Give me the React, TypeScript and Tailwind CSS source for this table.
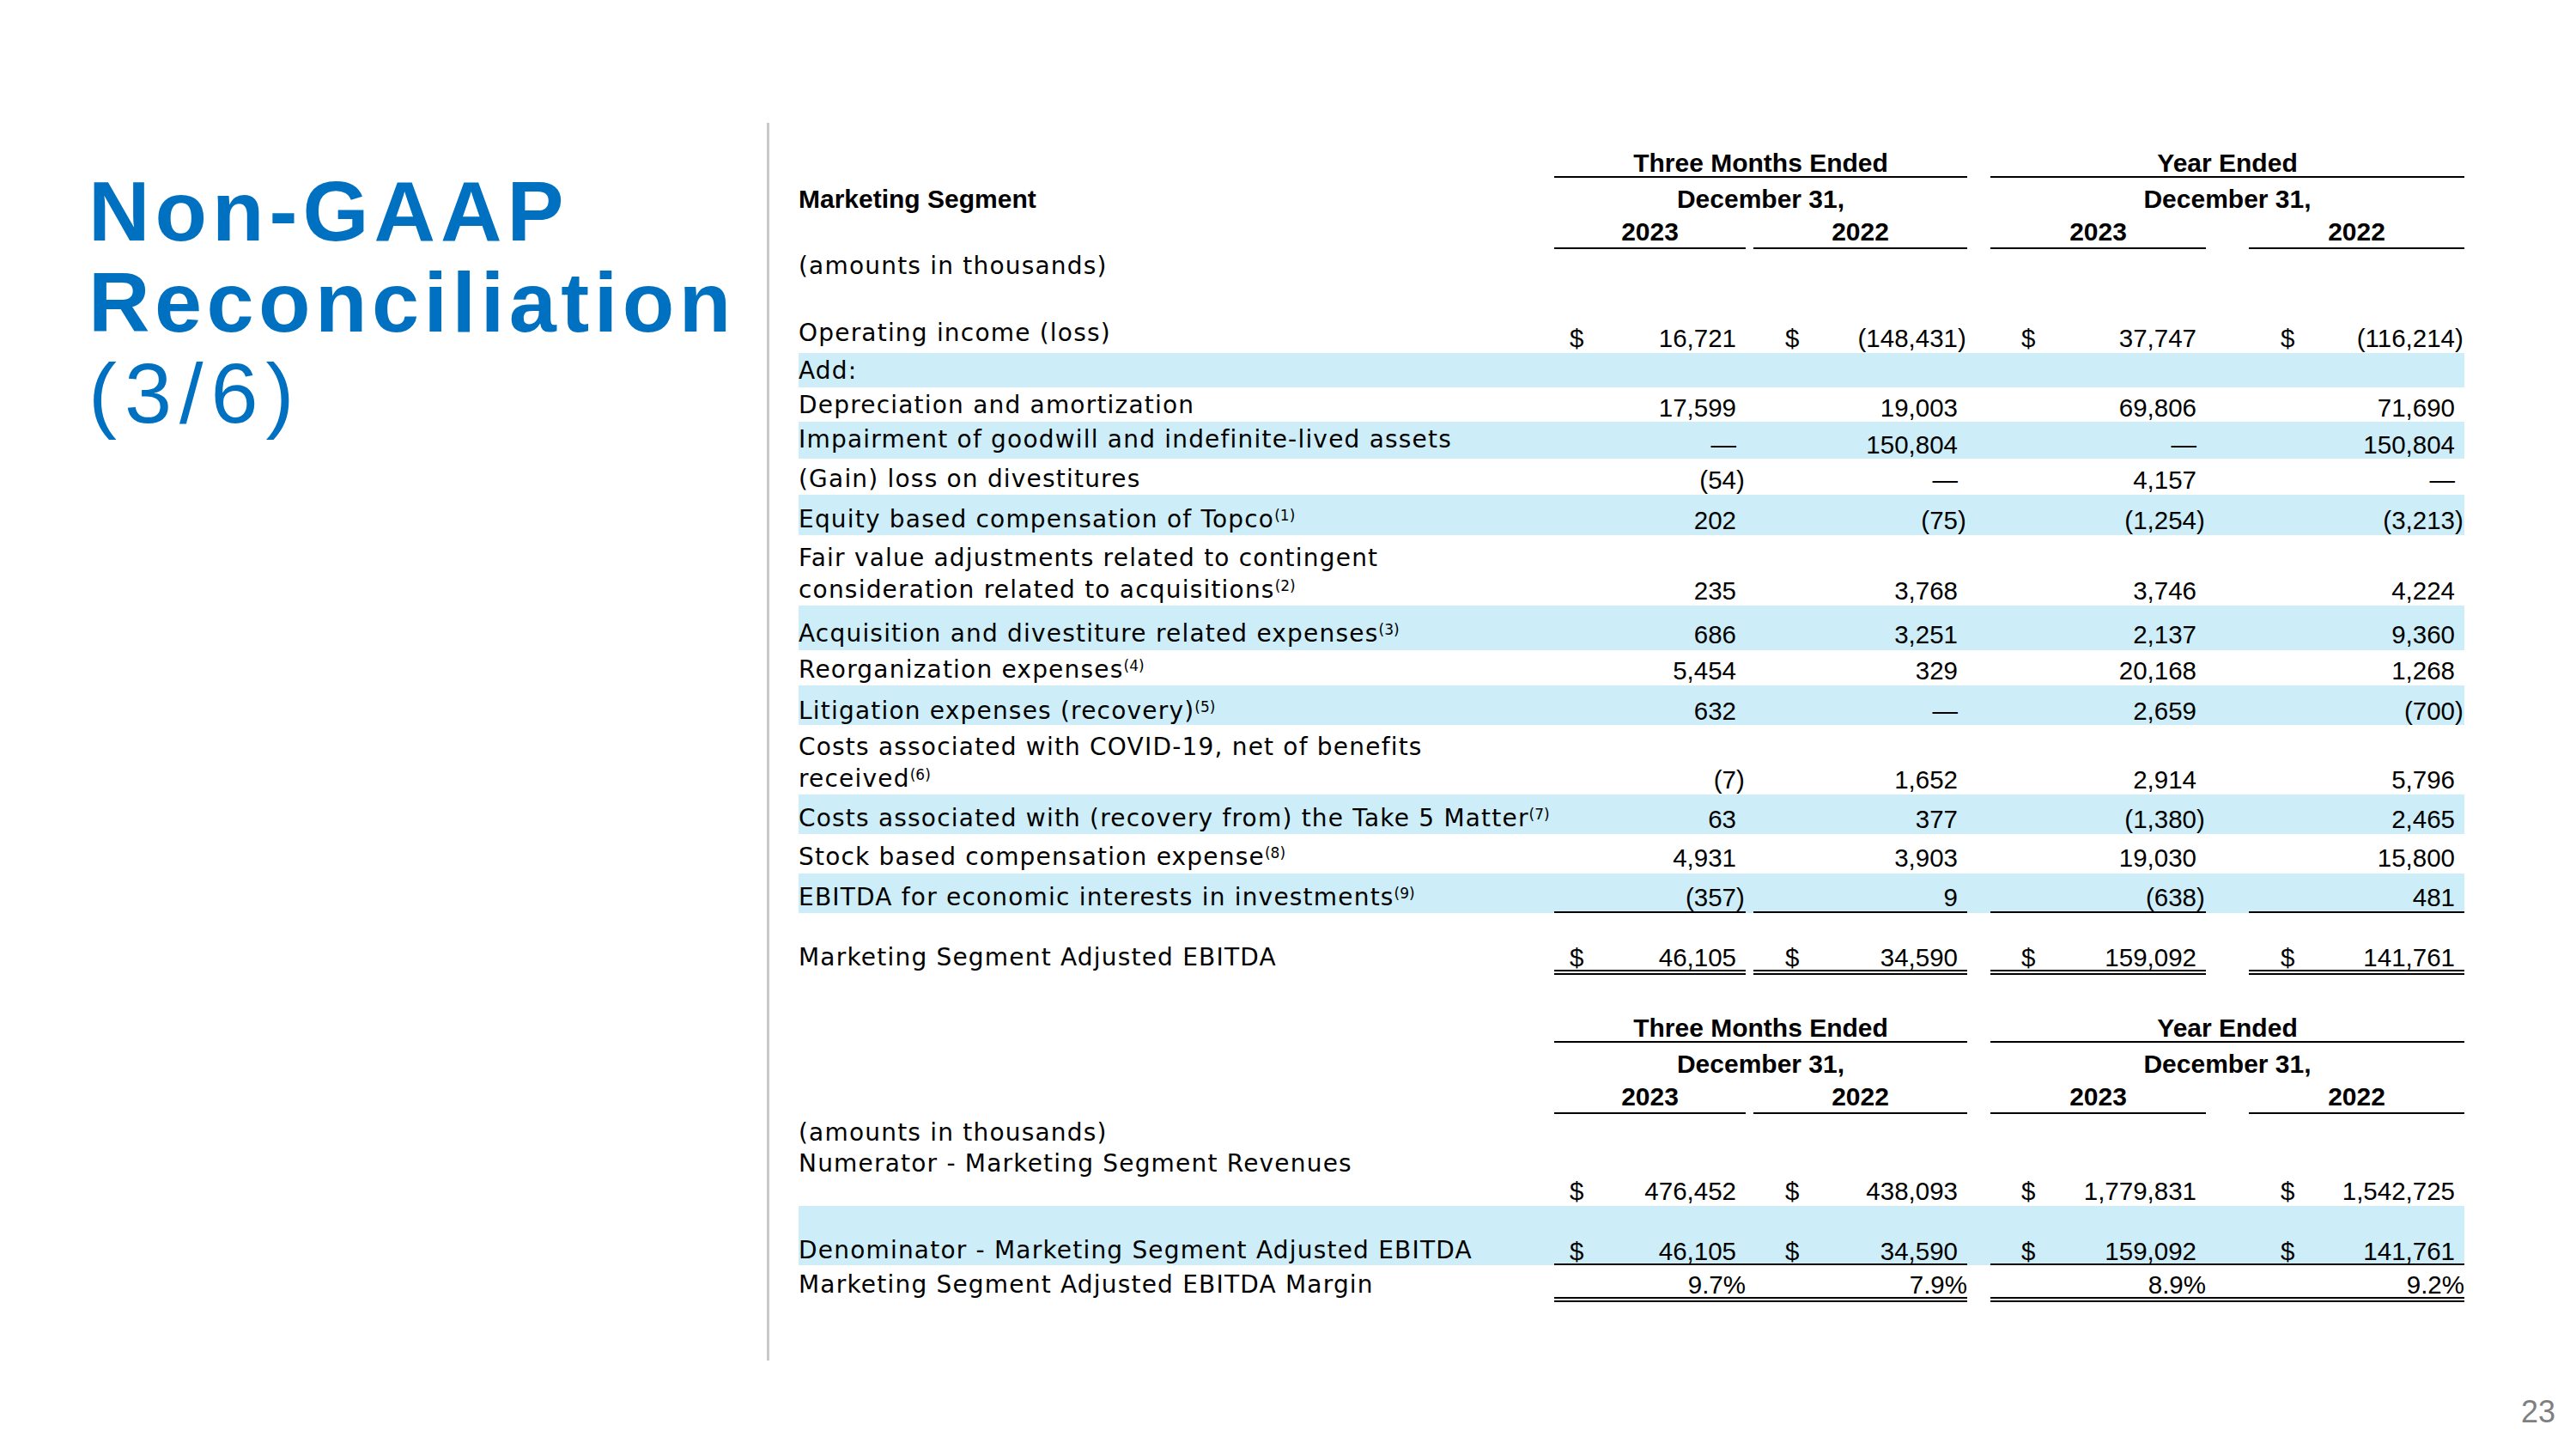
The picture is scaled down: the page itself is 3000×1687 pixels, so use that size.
import React from 'react';

type Row = {
  label?: React.ReactNode;
  vals?: string[];
  dollar?: boolean;
  band?: boolean;
  h: string;
  lpb?: string;
  vpb?: string;
  two?: boolean;
  ltop?: string;
  line?: 'single' | 'double';
  merged?: boolean;
};

const SANS = "font-['Liberation_Sans',Arial,sans-serif]";
const LBL = "font-['DejaVu_Sans',sans-serif] text-[28px] tracking-[1.2px]";
const BOLD = `${SANS} font-bold text-[30px] leading-none`;
const NUM = `${SANS} text-[29.5px] leading-none`;

const COLS = [
  { w: 'w-[223px]', d: 'pl-[18px]' },
  { w: 'w-[249px]', d: 'pl-[37px]' },
  { w: 'w-[251px]', d: 'pl-[36px]' },
  { w: 'w-[251px]', d: 'pl-[37px]' },
];
const GAPS = ['', 'w-[9px]', 'w-[27px]', 'w-[50px]'];

const LINES = {
  single: 'border-b-2 border-black',
  double: 'border-b-[6px] border-double border-black',
};

const Note = ({ n }: { n: number }) => (
  <sup className="text-[17px] tracking-normal">({n})</sup>
);

const table1: Row[] = [
  { label: '(amounts in thousands)', h: 'h-[35px]', lpb: 'pb-[1px]' },
  {
    label: 'Operating income (loss)',
    vals: ['16,721', '(148,431)', '37,747', '(116,214)'],
    dollar: true,
    h: 'h-[86px]',
    lpb: 'pb-[9px]',
    vpb: 'pb-[3px]',
  },
  { label: 'Add:', band: true, h: 'h-[40px]', lpb: 'pb-[5px]' },
  {
    label: 'Depreciation and amortization',
    vals: ['17,599', '19,003', '69,806', '71,690'],
    h: 'h-[40px]',
    lpb: 'pb-[5px]',
    vpb: 'pb-[2px]',
  },
  {
    label: 'Impairment of goodwill and indefinite-lived assets',
    vals: ['—', '150,804', '—', '150,804'],
    band: true,
    h: 'h-[43px]',
    lpb: 'pb-[8px]',
    vpb: 'pb-[2px]',
  },
  {
    label: '(Gain) loss on divestitures',
    vals: ['(54)', '—', '4,157', '—'],
    h: 'h-[42px]',
    lpb: 'pb-[4px]',
    vpb: 'pb-[3px]',
  },
  {
    label: (
      <>
        Equity based compensation of Topco<Note n={1} />
      </>
    ),
    vals: ['202', '(75)', '(1,254)', '(3,213)'],
    band: true,
    h: 'h-[47px]',
    lpb: 'pb-[4px]',
    vpb: 'pb-[3px]',
  },
  {
    label: (
      <>
        Fair value adjustments related to contingent
        <br />
        consideration related to acquisitions<Note n={2} />
      </>
    ),
    two: true,
    vals: ['235', '3,768', '3,746', '4,224'],
    h: 'h-[82px]',
    lpb: 'pb-0',
    vpb: 'pb-[3px]',
  },
  {
    label: (
      <>
        Acquisition and divestiture related expenses<Note n={3} />
      </>
    ),
    vals: ['686', '3,251', '2,137', '9,360'],
    band: true,
    h: 'h-[52px]',
    lpb: 'pb-[5px]',
    vpb: 'pb-[4px]',
  },
  {
    label: (
      <>
        Reorganization expenses<Note n={4} />
      </>
    ),
    vals: ['5,454', '329', '20,168', '1,268'],
    h: 'h-[41px]',
    lpb: 'pb-[4px]',
    vpb: 'pb-[3px]',
  },
  {
    label: (
      <>
        Litigation expenses (recovery)<Note n={5} />
      </>
    ),
    vals: ['632', '—', '2,659', '(700)'],
    band: true,
    h: 'h-[46px]',
    lpb: 'pb-[2px]',
    vpb: 'pb-[2px]',
  },
  {
    label: (
      <>
        Costs associated with COVID-19, net of benefits
        <br />
        received<Note n={6} />
      </>
    ),
    two: true,
    vals: ['(7)', '1,652', '2,914', '5,796'],
    h: 'h-[81px]',
    lpb: 'pb-0',
    vpb: 'pb-[3px]',
  },
  {
    label: (
      <>
        Costs associated with (recovery from) the Take 5 Matter<Note n={7} />
      </>
    ),
    vals: ['63', '377', '(1,380)', '2,465'],
    band: true,
    h: 'h-[46px]',
    lpb: 'pb-[4px]',
    vpb: 'pb-[3px]',
  },
  {
    label: (
      <>
        Stock based compensation expense<Note n={8} />
      </>
    ),
    vals: ['4,931', '3,903', '19,030', '15,800'],
    h: 'h-[46px]',
    lpb: 'pb-[5px]',
    vpb: 'pb-[4px]',
  },
  {
    label: (
      <>
        EBITDA for economic interests in investments<Note n={9} />
      </>
    ),
    vals: ['(357)', '9', '(638)', '481'],
    band: true,
    h: 'h-[46px]',
    lpb: 'pb-[4px]',
    vpb: 'pb-[2px]',
    line: 'single',
  },
  {
    label: 'Marketing Segment Adjusted EBITDA',
    vals: ['46,105', '34,590', '159,092', '141,761'],
    dollar: true,
    h: 'h-[72px]',
    lpb: 'pb-[6px]',
    vpb: 'pb-0',
    line: 'double',
  },
];

const table2: Row[] = [
  { label: '(amounts in thousands)', h: 'h-[37px]', lpb: 'pb-[1px]' },
  {
    label: 'Numerator - Marketing Segment Revenues',
    ltop: 'pt-[7px]',
    vals: ['476,452', '438,093', '1,779,831', '1,542,725'],
    dollar: true,
    h: 'h-[70px]',
    vpb: 'pb-[3px]',
  },
  {
    label: 'Denominator - Marketing Segment Adjusted EBITDA',
    vals: ['46,105', '34,590', '159,092', '141,761'],
    dollar: true,
    band: true,
    h: 'h-[69px]',
    lpb: 'pb-[3px]',
    vpb: 'pb-0',
    line: 'single',
    merged: true,
  },
  {
    label: 'Marketing Segment Adjusted EBITDA Margin',
    vals: ['9.7%', '7.9%', '8.9%', '9.2%'],
    h: 'h-[43px]',
    lpb: 'pb-[6px]',
    vpb: 'pb-0',
    line: 'double',
    merged: true,
  },
];

const Amount = ({ v }: { v: string }) => {
  const neg = v.startsWith('(');
  const pct = v.endsWith('%');
  const body = neg ? v.slice(0, -1) : v;
  return (
    <span className="flex items-end">
      <span>{body}</span>
      {!pct && <span className="w-[11px]">{neg ? ')' : ''}</span>}
    </span>
  );
};

const TableRow = ({ row }: { row: Row }) => {
  const line = row.line ? LINES[row.line] : '';
  return (
    <div className={`flex ${row.h} ${row.band ? 'bg-[#cdeef9]' : ''}`}>
      <div
        className={`w-[880px] shrink-0 flex whitespace-nowrap text-black ${LBL} ${
          row.two ? 'leading-[37px]' : 'leading-none'
        } ${row.ltop ? `items-start ${row.ltop}` : `items-end ${row.lpb ?? ''}`}`}
      >
        <span>{row.label}</span>
      </div>
      {COLS.map((c, i) => (
        <React.Fragment key={i}>
          {i > 0 && (
            <div className={`${GAPS[i]} shrink-0 ${row.merged && i !== 2 ? line : ''}`} />
          )}
          <div
            className={`${c.w} shrink-0 flex items-end justify-between text-black ${NUM} ${
              row.vpb ?? ''
            } ${row.vals ? line : ''}`}
          >
            <span className={row.dollar ? c.d : ''}>{row.dollar ? '$' : ''}</span>
            {row.vals && <Amount v={row.vals[i]} />}
          </div>
        </React.Fragment>
      ))}
    </div>
  );
};

const Header = ({ first, segment }: { first: string; segment?: string }) => (
  <div className={`flex flex-col text-black ${BOLD}`}>
    <div className={`flex ${first}`}>
      <div className="w-[880px] shrink-0" />
      <div className="w-[481px] shrink-0 flex items-end justify-center border-b-2 border-black">
        Three Months Ended
      </div>
      <div className="w-[27px] shrink-0" />
      <div className="w-[552px] shrink-0 flex items-end justify-center border-b-2 border-black">
        Year Ended
      </div>
    </div>
    <div className="flex h-[40px]">
      <div className="w-[880px] shrink-0 flex items-end">{segment}</div>
      <div className="w-[481px] shrink-0 flex items-end justify-center">December 31,</div>
      <div className="w-[27px] shrink-0" />
      <div className="w-[552px] shrink-0 flex items-end justify-center">December 31,</div>
    </div>
    <div className="flex h-[43px]">
      <div className="w-[880px] shrink-0" />
      {COLS.map((c, i) => (
        <React.Fragment key={i}>
          {i > 0 && <div className={`${GAPS[i]} shrink-0`} />}
          <div
            className={`${c.w} shrink-0 flex items-end justify-center pb-[3px] border-b-2 border-black`}
          >
            {i % 2 === 0 ? '2023' : '2022'}
          </div>
        </React.Fragment>
      ))}
    </div>
  </div>
);

export default function App() {
  return (
    <div className="w-[3000px] h-[1687px] bg-white flex flex-col overflow-hidden">
      <div className="flex h-[1584px]">
        <div className={`w-[893px] shrink-0 pt-[193px] pl-[103px] text-[#0070c0] ${SANS}`}>
          <div className="text-[99px] leading-[106px] font-bold tracking-[6px]">Non-GAAP</div>
          <div className="text-[99px] leading-[106px] font-bold tracking-[5.5px]">Reconciliation</div>
          <div className="text-[99px] leading-[106px] tracking-[9px]">(3/6)</div>
        </div>
        <div className="mt-[143px] h-[1441px] border-l-[3px] border-[#c9c9c9] pl-[34px] flex flex-col">
          <Header first="h-[64px]" segment="Marketing Segment" />
          {table1.map((r, i) => (
            <TableRow key={i} row={r} />
          ))}
          <Header first="h-[79px]" />
          {table2.map((r, i) => (
            <TableRow key={i} row={r} />
          ))}
        </div>
      </div>
      <div className={`flex justify-end pr-[24px] mt-[42px] text-[36px] leading-none text-[#7f7f7f] ${SANS}`}>
        23
      </div>
    </div>
  );
}
